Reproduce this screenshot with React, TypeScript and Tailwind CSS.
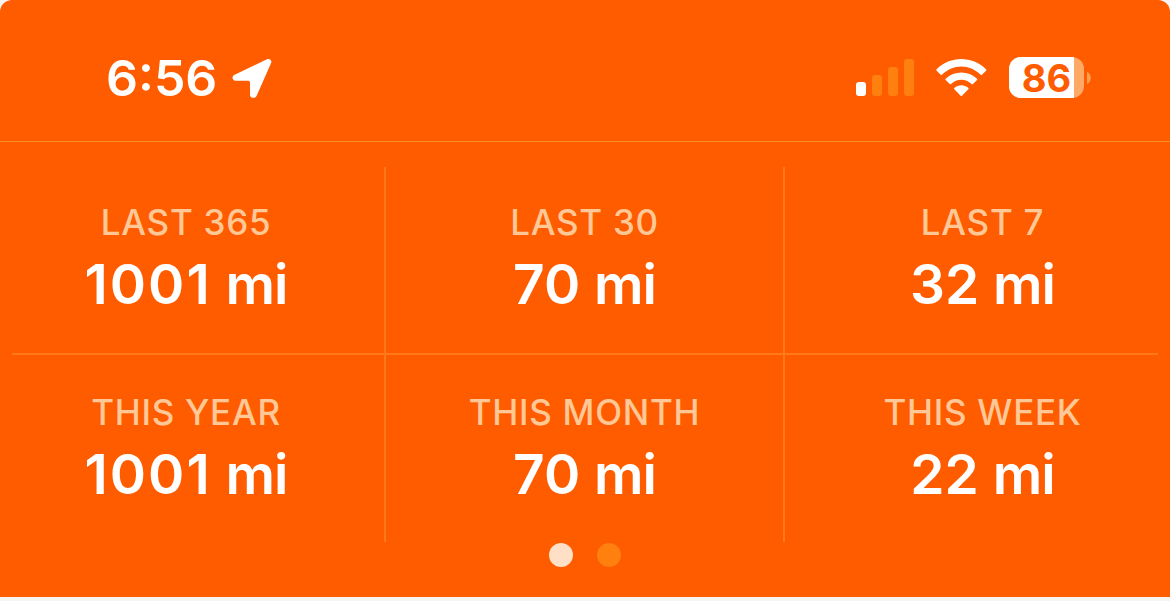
const STATS = [
  [
    { label: "LAST 365", value: "1001", tracking: "tracking-[2px]" },
    { label: "LAST 30", value: "70", tracking: "tracking-normal" },
    { label: "LAST 7", value: "32", tracking: "tracking-normal" },
  ],
  [
    { label: "THIS YEAR", value: "1001", tracking: "tracking-[2px]" },
    { label: "THIS MONTH", value: "70", tracking: "tracking-normal" },
    { label: "THIS WEEK", value: "22", tracking: "tracking-normal" },
  ],
];

const CELL_STYLES = ["pr-3", "border-x-2 border-[#ff781a]", "pl-[10px]"];

function LocationArrow() {
  return (
    <svg className="ml-[15px] h-[41px] w-[40px]" viewBox="0 0 120 123" fill="#fff">
      <path d="M105 4C113 0 121 7 117 16L74 113C69 123 54 121 54 111V73Q54 68 49 68H11C0 68-2 54 8 50Z" />
    </svg>
  );
}

function SignalBars() {
  return (
    <div className="mb-px flex h-[38px] items-end gap-1.5">
      <div className="h-[14px] w-2.5 rounded-[3px] bg-white" />
      <div className="h-[21px] w-2.5 rounded-[3px] bg-[#ff7f0f]" />
      <div className="h-[29px] w-2.5 rounded-[3px] bg-[#ff7f0f]" />
      <div className="h-[37px] w-2.5 rounded-[3px] bg-[#ff7f0f]" />
    </div>
  );
}

function Wifi() {
  return (
    <svg className="ml-[22px] h-[39px] w-[51px]" viewBox="0 0 153 117" fill="#fff">
      <path d="M2 34C43-7 109-7 150 34Q152 36 150 38L138 50Q136 52 134 50C101 17 51 17 18 50Q16 52 14 50L2 38Q0 36 2 34Z" />
      <path d="M29 62C55 37 97 37 123 62Q125 64 123 66L111 78Q109 80 107 78C89 61 63 61 45 78Q43 80 41 78L29 66Q27 64 29 62Z" />
      <path d="M55 90C67 79 85 79 97 90Q99 92 97 94L78 113Q76 115 74 113L55 94Q53 92 55 90Z" />
    </svg>
  );
}

function Battery({ level }: { level: number }) {
  return (
    <div className="ml-[22px] flex items-center">
      <div className="relative h-[41px] w-[75px] rounded-[12px] bg-[#ffa966] text-center">
        <div className="absolute inset-y-0 left-0 rounded-l-[12px] bg-white" style={{ width: `${level}%` }} />
        <span className="relative text-[38px] leading-[42px] font-bold text-[#ff5c00]">{level}</span>
      </div>
      <svg className="ml-[3px] h-3 w-1" viewBox="0 0 4 12" fill="#ffa04f">
        <path d="M0 0C5 2 5 10 0 12Z" />
      </svg>
    </div>
  );
}

function StatRow({ row, className }: { row: typeof STATS[0]; className: string }) {
  return (
    <div className="grid grid-cols-[384px_401px_385px]">
      {row.map((s, i) => (
        <div key={s.label} className={`flex flex-col items-center ${className} ${CELL_STYLES[i]}`}>
          <div className="text-[35px] leading-10 font-[550] tracking-[0.7px] whitespace-nowrap text-[#ffc896]">{s.label}</div>
          <div className="mt-3 text-[55px] leading-[60px] font-semibold whitespace-nowrap text-white">
            <span className={s.tracking}>{s.value}</span> <span className="tracking-[-1px]">mi</span>
          </div>
        </div>
      ))}
    </div>
  );
}

export default function App() {
  return (
    <div className="h-[601px] w-[1170px] bg-[#f7f3f1] font-['Inter',sans-serif]">
      <div className="h-[597px] overflow-hidden rounded-t-[12px] bg-[#ff5c00]">
        <div className="flex h-[142px] justify-between border-b border-[#ff8c26] pt-[57px] pr-[79px] pl-[106px]">
          <div className="flex h-[42px] items-center">
            <span className="text-[50px] leading-none font-semibold text-white">6:56</span>
            <LocationArrow />
          </div>
          <div className="flex h-[41px] items-center">
            <SignalBars />
            <Wifi />
            <Battery level={86} />
          </div>
        </div>

        <div className="pt-[25px]">
          <StatRow row={STATS[0]} className="h-[186px] pt-[35px]" />
          <div className="mx-3 h-0.5 bg-[#ff781a]" />
          <StatRow row={STATS[1]} className="h-[187px] pt-[37px]" />
        </div>

        <div className="mt-px flex justify-center gap-6">
          <div className="size-6 rounded-full bg-[#ffdfc5]" />
          <div className="size-6 rounded-full bg-[#ff7f0f]" />
        </div>
      </div>
    </div>
  );
}
